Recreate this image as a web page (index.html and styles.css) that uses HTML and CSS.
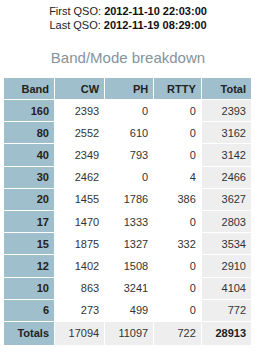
FILE: index.html
```html
<!DOCTYPE html>
<html>
<head>
<meta charset="utf-8">
<link rel="stylesheet" href="styles.css">
</head>
<body>
<div class="meta">
  <div>First QSO: <b>2012-11-10 22:03:00</b></div>
  <div>Last QSO: <b>2012-11-19 08:29:00</b></div>
</div>
<h2 class="title">Band/Mode breakdown</h2>
<table class="stats">
  <thead>
    <tr><th>Band</th><th>CW</th><th>PH</th><th>RTTY</th><th class="tot">Total</th></tr>
  </thead>
  <tbody>
    <tr><th>160</th><td>2393</td><td>0</td><td>0</td><td class="tot">2393</td></tr>
    <tr><th>80</th><td>2552</td><td>610</td><td>0</td><td class="tot">3162</td></tr>
    <tr><th>40</th><td>2349</td><td>793</td><td>0</td><td class="tot">3142</td></tr>
    <tr><th>30</th><td>2462</td><td>0</td><td>4</td><td class="tot">2466</td></tr>
    <tr><th>20</th><td>1455</td><td>1786</td><td>386</td><td class="tot">3627</td></tr>
    <tr><th>17</th><td>1470</td><td>1333</td><td>0</td><td class="tot">2803</td></tr>
    <tr><th>15</th><td>1875</td><td>1327</td><td>332</td><td class="tot">3534</td></tr>
    <tr><th>12</th><td>1402</td><td>1508</td><td>0</td><td class="tot">2910</td></tr>
    <tr><th>10</th><td>863</td><td>3241</td><td>0</td><td class="tot">4104</td></tr>
    <tr><th>6</th><td>273</td><td>499</td><td>0</td><td class="tot">772</td></tr>
  </tbody>
  <tfoot>
    <tr class="totals"><th>Totals</th><td>17094</td><td>11097</td><td>722</td><td class="grand">28913</td></tr>
  </tfoot>
</table>
</body>
</html>
```
FILE: styles.css
```css
body {
  margin: 0;
  font-family: "Liberation Sans", Arial, sans-serif;
  font-size: 11px;
  color: #222;
  background: #fff;
}
.meta {
  text-align: center;
  padding-top: 4px;
  line-height: 14px;
}
.meta b { color: #111; }
.title {
  margin: 16px 0 0;
  text-align: center;
  font-size: 15px;
  font-weight: normal;
  color: #84939c;
  line-height: 20px;
}
.stats {
  margin: 9px 0 0 3px;
  width: 249px;
  border-collapse: collapse;
  border-top: 1px solid #b3c0c6;
}
.stats th, .stats td {
  height: 21.2px;
  padding: 0 5px 0 0;
  text-align: right;
  border: 1px solid #fff;
}
.stats th {
  background: #a0bfcc;
  font-weight: bold;
  color: #222;
}
.stats td {
  color: #333;
  background: #fff;
}
.stats thead th { height: 21px; }
.stats thead th:first-child, .stats tbody th, .stats tfoot th { width: 45px; }
.stats .tot { background: #eeeeee; }
.stats tfoot td { background: #eeeeee; color: #333; height: 23px; }
.stats tfoot th { height: 23px; }
.stats tfoot td.grand { font-weight: bold; color: #222; }
.stats thead th.tot { background: #a0bfcc; }
```
